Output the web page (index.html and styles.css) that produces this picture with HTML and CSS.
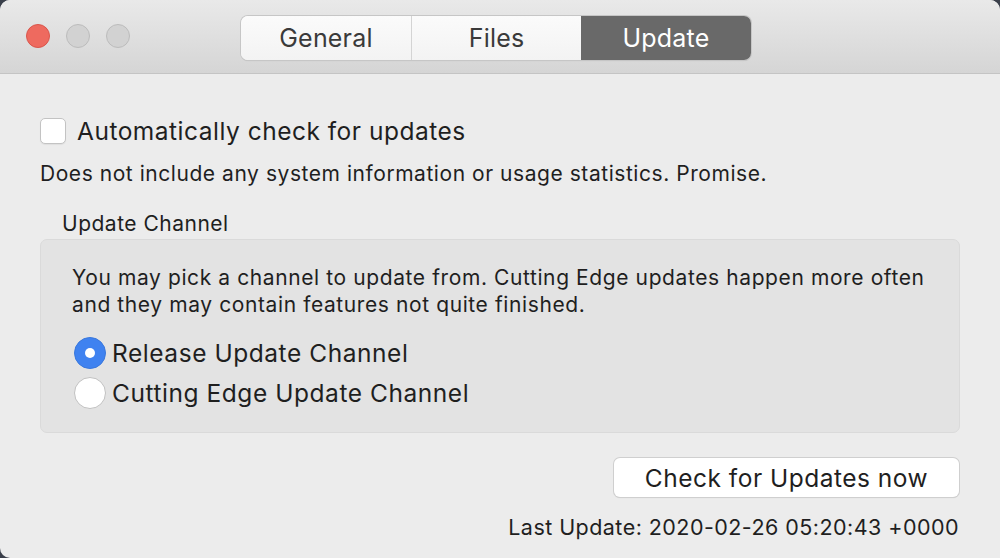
FILE: index.html
```html
<!DOCTYPE html>
<html>
<head>
<meta charset="utf-8">
<link rel="stylesheet" href="styles.css">
</head>
<body>
<div class="window">
  <div class="titlebar">
    <div class="lights">
      <span class="light red"></span>
      <span class="light"></span>
      <span class="light"></span>
    </div>
    <div class="segmented">
      <div class="seg">General</div>
      <div class="seg">Files</div>
      <div class="seg active">Update</div>
    </div>
  </div>
  <div class="content">
    <label class="check-row">
      <span class="checkbox"></span>
      <span class="check-label">Automatically check for updates</span>
    </label>
    <p class="note">Does not include any system information or usage statistics. Promise.</p>
    <div class="group-title">Update Channel</div>
    <div class="group">
      <p class="group-text">You may pick a channel to update from. Cutting Edge updates happen more often<br>and they may contain features not quite finished.</p>
      <div class="radio-row">
        <span class="radio on"></span>
        <span class="radio-label">Release Update Channel</span>
      </div>
      <div class="radio-row">
        <span class="radio"></span>
        <span class="radio-label">Cutting Edge Update Channel</span>
      </div>
    </div>
    <div class="actions">
      <div class="button">Check for Updates now</div>
      <div class="last">Last Update: 2020-02-26 05:20:43 +0000</div>
    </div>
  </div>
</div>
</body>
</html>
```
FILE: styles.css
```css
html, body {
  margin: 0;
  padding: 0;
  width: 1000px;
  height: 558px;
  overflow: hidden;
  background: #3a3f4a;
}
body {
  font-family: "Inter", "Liberation Sans", Arial, sans-serif;
  color: #1f1f1f;
}
.window {
  width: 1000px;
  height: 558px;
  background: #ececec;
  border-radius: 10px 10px 0 10px;
  overflow: hidden;
  display: flex;
  flex-direction: column;
}
.titlebar {
  height: 74px;
  background: linear-gradient(#e9e9e9, #d5d5d5);
  border-bottom: 1px solid #c4c4c4;
  display: flex;
  align-items: center;
  box-sizing: border-box;
  flex-shrink: 0;
}
.lights {
  display: flex;
  gap: 16px;
  padding-left: 26px;
  padding-bottom: 2px;
}
.light {
  width: 22px;
  height: 22px;
  border-radius: 50%;
  background: #d2d2d2;
  border: 1px solid #bcbcbc;
}
.light.red {
  background: #ee6a5f;
  border-color: #d9564c;
}
.segmented {
  display: flex;
  margin-left: 111px;
  margin-top: 2px;
  height: 44px;
  border-radius: 7px;
  box-shadow: 0 0 0 1px #c6c6c6, 0 1px 1px rgba(0,0,0,0.12);
  overflow: hidden;
  background: #f6f6f6;
}
.seg {
  display: flex;
  align-items: center;
  justify-content: center;
  font-size: 25px;
  letter-spacing: 0.2px;
  color: #3a3a3a;
  height: 44px;
  background: linear-gradient(#fbfbfb, #f3f3f3);
}
.seg:nth-child(1) { width: 171px; border-right: 1px solid #d4d4d4; box-sizing: border-box; }
.seg:nth-child(2) { width: 169px; }
.seg.active {
  width: 170px;
  background: #696969;
  color: #ffffff;
}
.content {
  flex: 1;
  padding: 42px 40px 0 40px;
  display: flex;
  flex-direction: column;
}
.check-row {
  display: flex;
  align-items: center;
  gap: 11px;
  height: 30px;
}
.checkbox {
  width: 24px;
  height: 24px;
  border-radius: 5px;
  background: #ffffff;
  border: 1px solid #c3c3c3;
  box-shadow: 0 1px 1px rgba(0,0,0,0.06);
}
.check-label {
  font-size: 24.5px;
  letter-spacing: 0.5px;
}
.note {
  margin: 13px 0 0 0;
  font-size: 21px;
  line-height: 30px;
  letter-spacing: 0.55px;
}
.group-title {
  margin: 22px 0 0 22px;
  font-size: 21px;
  line-height: 26px;
  letter-spacing: 0.5px;
}
.group {
  margin-top: 2px;
  height: 194px;
  box-sizing: border-box;
  background: #e3e3e3;
  border: 1px solid #dadada;
  border-radius: 7px;
  padding: 24px 31px 0 31px;
}
.group-text {
  margin: 0 0 15px 0;
  font-size: 21px;
  line-height: 27px;
  letter-spacing: 0.6px;
}
.radio-row {
  display: flex;
  align-items: center;
  gap: 6px;
  height: 40px;
  margin-left: 2px;
}
.radio {
  width: 32px;
  height: 32px;
  border-radius: 50%;
  background: #ffffff;
  border: 1px solid #c1c1c1;
  box-sizing: border-box;
  position: relative;
}
.radio.on {
  background: #3f82f0;
  border-color: #3a78dc;
}
.radio.on::after {
  content: "";
  position: absolute;
  left: 10px;
  top: 10px;
  width: 10px;
  height: 10px;
  border-radius: 50%;
  background: #ffffff;
}
.radio-label {
  font-size: 24.5px;
  letter-spacing: 0.55px;
}
.actions {
  display: flex;
  flex-direction: column;
  align-items: flex-end;
  margin-top: 25px;
}
.button {
  width: 345px;
  height: 39px;
  margin-right: 1px;
  box-sizing: border-box;
  background: #ffffff;
  border-radius: 6px;
  box-shadow: 0 0 0 1px #cfcfcf, 0 1px 1px rgba(0,0,0,0.15);
  display: flex;
  align-items: center;
  justify-content: center;
  font-size: 24.5px;
  letter-spacing: 0.5px;
}
.last {
  margin-top: 16px;
  margin-right: 1px;
  font-size: 21.5px;
  line-height: 28px;
  letter-spacing: 0.45px;
}
```
